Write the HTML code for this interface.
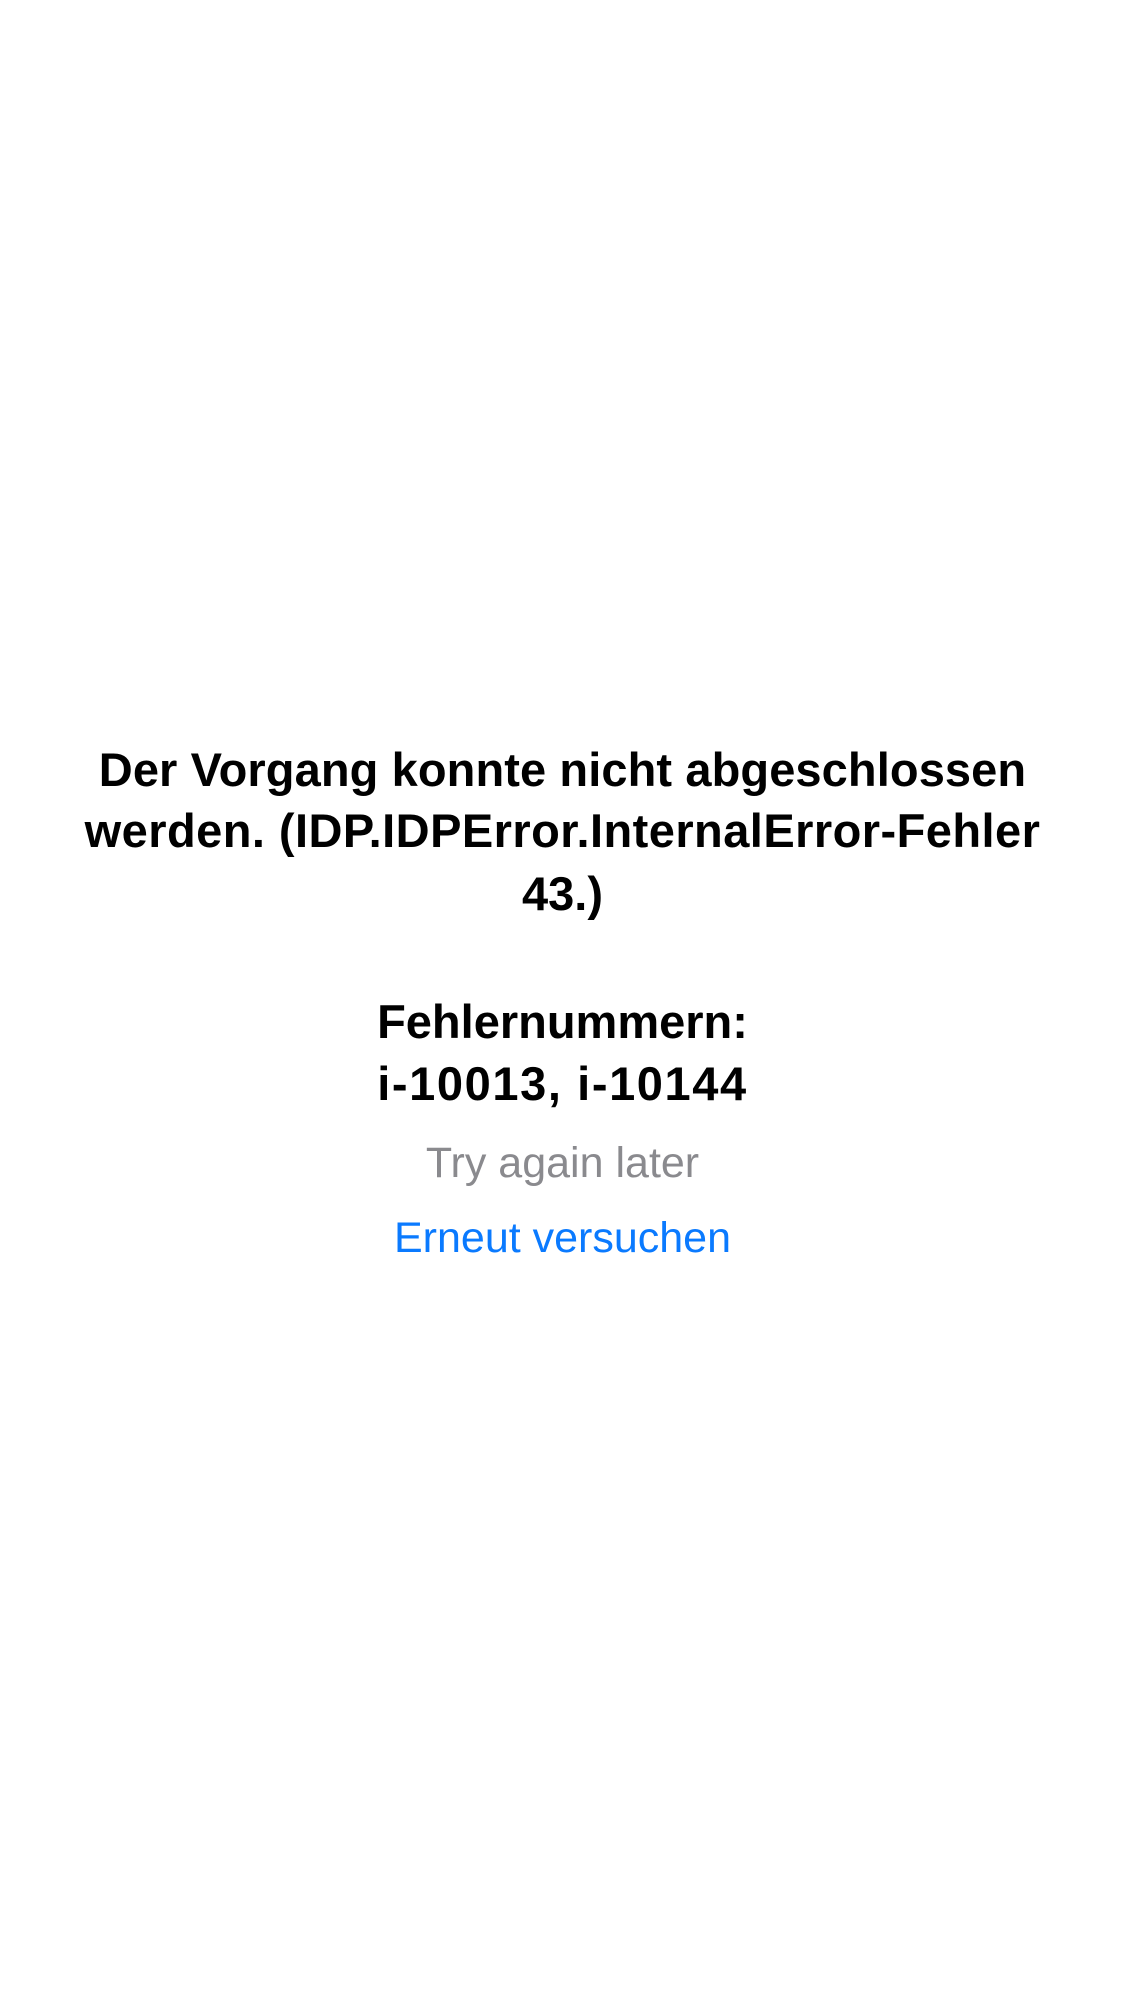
<!DOCTYPE html>
<html><head><meta charset="utf-8"><style>
html,body{margin:0;padding:0;background:#fff;width:1125px;height:2001px;overflow:hidden}
.l{position:absolute;left:0;width:1125px;text-align:center;font-family:"Liberation Sans",sans-serif;line-height:1;white-space:nowrap}
.b{font-weight:bold;font-size:47px;color:#000;letter-spacing:0}
.g{font-size:43px;color:#8a8a8e}
.u{font-size:43px;color:#0a7aff}
</style></head><body>
<div class="l b" style="top:746px;letter-spacing:0.1px">Der Vorgang konnte nicht abgeschlossen</div>
<div class="l b" style="top:807px;letter-spacing:0.45px">werden. (IDP.IDPError.InternalError-Fehler</div>
<div class="l b" style="top:870px">43.)</div>
<div class="l b" style="top:998px">Fehlernummern:</div>
<div class="l b" style="top:1060px;letter-spacing:1.6px">i-10013, i-10144</div>
<div class="l g" style="top:1142px">Try again later</div>
<div class="l u" style="top:1217px">Erneut versuchen</div>
</body></html>
